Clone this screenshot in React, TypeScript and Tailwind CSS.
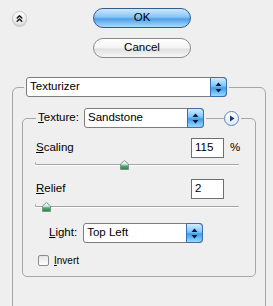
import { ChevronsUp } from "lucide-react";

const SpinArrows = () => (
  <svg width="7" height="11" viewBox="0 0 7 11">
    <path d="M3.5 0.5 L6.5 4 L0.5 4 Z" fill="#0b1a33" />
    <path d="M3.5 10.5 L6.5 7 L0.5 7 Z" fill="#0b1a33" />
  </svg>
);

const Select = ({ value, width }: { value: string; width: string }) => (
  <div
    className={`flex h-[20px] ${width} items-stretch rounded-[3px] border border-[#7d7d7d] bg-white`}
  >
    <div className="flex flex-1 items-center pl-[3px] text-[11.5px] leading-none text-black">
      {value}
    </div>
    <div className="-my-px -mr-px flex w-[17px] items-center justify-center rounded-r-[4px] border border-[#3c6fae] bg-[linear-gradient(#d4ecff,#7cc4fa_45%,#3d9cf0_55%,#9ad8ff)]">
      <SpinArrows />
    </div>
  </div>
);

const TextBox = ({ value }: { value: string }) => (
  <div className="flex h-[20px] w-[33px] items-center border border-[#6f6f6f] bg-white pl-[3px] text-[11.5px] leading-none">
    {value}
  </div>
);

const Thumb = () => (
  <svg width="9" height="10" viewBox="0 0 9 10">
    <defs>
      <linearGradient id="thumbGrad" x1="0" y1="0" x2="0" y2="1">
        <stop offset="0" stopColor="#ffffff" />
        <stop offset="0.4" stopColor="#d5ecdc" />
        <stop offset="0.6" stopColor="#4fae73" />
        <stop offset="1" stopColor="#2a7c4b" />
      </linearGradient>
    </defs>
    <path
      d="M4.5 0.5 L8.5 4 L8.5 9.5 L0.5 9.5 L0.5 4 Z"
      fill="url(#thumbGrad)"
      stroke="#7a9484"
    />
  </svg>
);

const Slider = ({ pos }: { pos: number }) => (
  <div className="relative -ml-[1px] h-[12px] w-[204px]">
    <div className="absolute left-0 right-0 top-[6px] h-px bg-[#a4a4a4]" />
    <div className="absolute left-0 right-0 top-[7px] h-px bg-white" />
    <div className="absolute left-0 top-[4px] h-[3px] w-px bg-[#b5b5b5]" />
    <div className="absolute top-[2px]" style={{ left: `${pos - 4}px` }}>
      <Thumb />
    </div>
  </div>
);

const U = ({ c }: { c: string }) => <span className="underline underline-offset-1">{c}</span>;

export default function App() {
  return (
    <div className="h-[306px] w-[273px] overflow-hidden bg-[#efefef] font-['Liberation_Sans',Arial,sans-serif] text-[11.5px] text-black">
      <div className="flex pt-[8px]">
        <div className="w-[93px] pl-[12px] pt-[3px]">
          <div className="flex h-[15px] w-[15px] items-center justify-center rounded-full border border-[#c4c4c4] bg-[linear-gradient(#ffffff,#e2e2e2)] shadow-[0_1px_1px_rgba(0,0,0,0.15)]">
            <ChevronsUp size={11} strokeWidth={3} color="#111" />
          </div>
        </div>
        <div className="flex flex-col gap-[10px]">
          <div className="flex h-[20px] w-[98px] items-center justify-center rounded-full border border-[#2f5d92] bg-[linear-gradient(#cfe8fd,#86c4f6_45%,#4f9fe8_55%,#a9dbff)] text-[11.5px] leading-none">
            OK
          </div>
          <div className="flex h-[20px] w-[98px] items-center justify-center rounded-full border border-[#8a8a8a] bg-[linear-gradient(#ffffff,#f4f4f4_50%,#e0e0e0_55%,#f6f6f6)] text-[11.5px] leading-none">
            Cancel
          </div>
        </div>
      </div>

      <fieldset className="ml-[12px] mt-[19px] w-[252px] rounded-[6px] border border-[#a6a6a6] px-[9px] pb-[40px] pt-[11px]">
        <legend className="ml-[2px] px-[2px]">
          <Select value="Texturizer" width="w-[201px]" />
        </legend>

        <fieldset className="rounded-[5px] border border-[#a6a6a6] pb-[10px] pl-[13px] pr-[14px] pt-[10px]">
          <legend className="px-[2px]">
            <div className="flex items-center">
              <span className="mr-[6px] w-[40px]">
                <U c="T" />exture:
              </span>
              <Select value="Sandstone" width="w-[120px]" />
              <div className="ml-[2px] h-px w-[18px] bg-[#a6a6a6]" />
              <div className="flex h-[15px] w-[15px] items-center justify-center rounded-full border border-[#5c83b8] bg-[linear-gradient(#ffffff,#dfe8f2)]">
                <svg width="6" height="7" viewBox="0 0 6 7">
                  <path d="M1 0.5 L5.5 3.5 L1 6.5 Z" fill="#123a78" />
                </svg>
              </div>
            </div>
          </legend>

          <div className="flex flex-col">
            <div className="flex h-[20px] items-center">
              <span className="flex-1">
                <U c="S" />caling
              </span>
              <TextBox value="115" />
              <span className="w-[17px] pl-[6px]">%</span>
            </div>
            <Slider pos={89} />

            <div className="mt-[9px] flex h-[20px] items-center">
              <span className="flex-1">
                <U c="R" />elief
              </span>
              <TextBox value="2" />
              <span className="w-[17px]" />
            </div>
            <div className="mt-[1px]">
              <Slider pos={11} />
            </div>

            <div className="mt-[11px] flex items-center pl-[13px]">
              <span className="mr-[6px]">
                <U c="L" />ight:
              </span>
              <Select value="Top Left" width="w-[120px]" />
            </div>

            <div className="mt-[12px] flex items-center pl-[2px]">
              <div className="h-[11px] w-[11px] rounded-[2px] border border-[#8c8c8c] bg-[linear-gradient(#e4e4e4,#ffffff)]" />
              <span className="ml-[5px] text-[10px] leading-none">
                <U c="I" />nvert
              </span>
            </div>
          </div>
        </fieldset>
      </fieldset>
    </div>
  );
}
